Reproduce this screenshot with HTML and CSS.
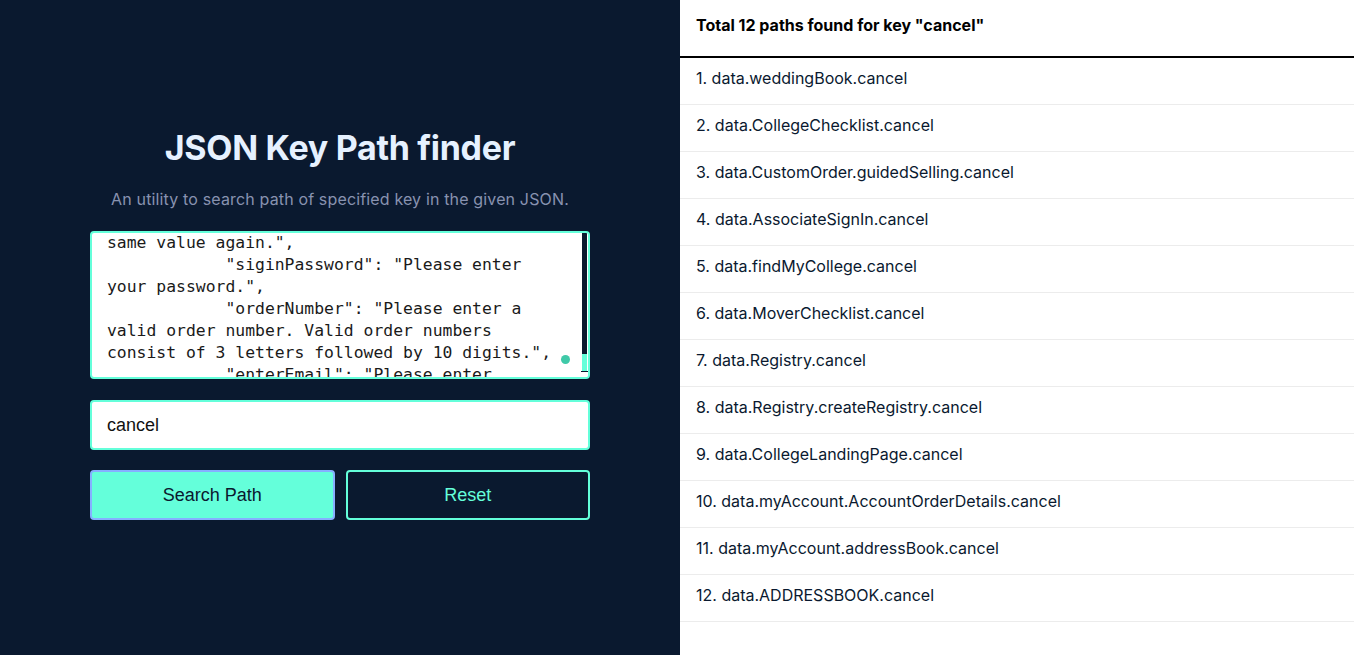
FILE: index.html
```html
<!DOCTYPE html>
<html lang="en">
<head>
<meta charset="utf-8">
<title>JSON Key Path finder</title>
<link rel="stylesheet" href="styles.css">
</head>
<body>
<div class="page">
  <section class="left">
    <div class="tool">
      <h1 class="title">JSON Key Path finder</h1>
      <p class="subtitle">An utility to search path of specified key in the given JSON.</p>
      <div class="json-box">
<pre class="json-text">same value again.",
            "siginPassword": "Please enter
your password.",
            "orderNumber": "Please enter a
valid order number. Valid order numbers
consist of 3 letters followed by 10 digits.",
            "enterEmail": "Please enter</pre>
        <span class="ext-dot"></span>
        <span class="scroll-track"><span class="scroll-thumb"></span></span>
        <span class="resize-corner"></span>
      </div>
      <div class="key-input">cancel</div>
      <div class="actions">
        <button class="btn btn-primary">Search Path</button>
        <button class="btn btn-outline">Reset</button>
      </div>
    </div>
  </section>
  <section class="right">
    <div class="results-head">Total 12 paths found for key "cancel"</div>
    <ul class="results">
      <li>1. data.weddingBook.cancel</li>
      <li>2. data.CollegeChecklist.cancel</li>
      <li>3. data.CustomOrder.guidedSelling.cancel</li>
      <li>4. data.AssociateSignIn.cancel</li>
      <li>5. data.findMyCollege.cancel</li>
      <li>6. data.MoverChecklist.cancel</li>
      <li>7. data.Registry.cancel</li>
      <li>8. data.Registry.createRegistry.cancel</li>
      <li>9. data.CollegeLandingPage.cancel</li>
      <li>10. data.myAccount.AccountOrderDetails.cancel</li>
      <li>11. data.myAccount.addressBook.cancel</li>
      <li>12. data.ADDRESSBOOK.cancel</li>
    </ul>
  </section>
</div>
</body>
</html>
```
FILE: styles.css
```css
* { box-sizing: border-box; }
html, body { margin: 0; padding: 0; height: 100%; }
body { font-family: Inter, "Noto Sans", sans-serif; }

.page {
  display: flex;
  height: 655px;
  width: 1354px;
}

.left {
  width: 680px;
  background: #0a192f;
  display: flex;
  justify-content: center;
  align-items: center;
}

.tool {
  width: 500px;
  display: flex;
  flex-direction: column;
  padding-bottom: 8px;
}

.title {
  margin: 0;
  font-size: 34px;
  line-height: 40px;
  font-weight: 700;
  color: #e6f1ff;
  text-align: center;
  letter-spacing: -0.3px;
}

.subtitle {
  margin: 21px 0 22px;
  font-size: 16px;
  line-height: 20px;
  color: #8892b0;
  text-align: center;
  letter-spacing: 0.15px;
}

.json-box {
  position: relative;
  height: 148px;
  background: #fff;
  border: 2px solid #64ffda;
  border-radius: 4px;
  overflow: hidden;
}

.json-text {
  margin: -1px 0 0;
  padding: 0 0 0 15px;
  font-family: "DejaVu Sans Mono", "Liberation Mono", monospace;
  font-size: 16.4px;
  line-height: 22px;
  color: #1a1a1a;
  white-space: pre;
}

.ext-dot {
  position: absolute;
  right: 18px;
  top: 122px;
  width: 9px;
  height: 9px;
  border-radius: 50%;
  background: #3fc9a8;
}

.scroll-track {
  position: absolute;
  right: 1px;
  top: 0;
  width: 5px;
  height: 138px;
  background: #0a192f;
}

.scroll-thumb {
  position: absolute;
  left: 0;
  bottom: 0;
  width: 5px;
  height: 17px;
  background: #64ffda;
}

.resize-corner {
  position: absolute;
  right: 0;
  bottom: 0;
  width: 7px;
  height: 6px;
  background: #fff;
  border-top: 1px solid #0a192f;
}

.key-input {
  margin-top: 21px;
  height: 50px;
  background: #fff;
  border: 2px solid #64ffda;
  border-radius: 4px;
  padding: 2px 15px 0;
  display: flex;
  align-items: center;
  font-family: "Liberation Sans", Arial, sans-serif;
  font-size: 18px;
  color: #111;
}

.actions {
  margin-top: 20px;
  display: flex;
  gap: 11px;
}

.btn {
  flex: 1;
  height: 50px;
  padding-top: 2px;
  border-radius: 4px;
  font-family: "Liberation Sans", Arial, sans-serif;
  font-size: 18px;
  cursor: pointer;
}

.btn-primary {
  background: #64ffda;
  border: 2px solid #85b0ff;
  color: #0a192f;
}

.btn-outline {
  background: #0a192f;
  border: 2px solid #64ffda;
  color: #64ffda;
}

.right {
  flex: 1;
  background: #fff;
}

.results-head {
  height: 58px;
  padding: 0 16px 6px;
  border-bottom: 2px solid #000;
  display: flex;
  align-items: center;
  font-size: 16px;
  font-weight: 700;
  color: #000;
}

.results {
  list-style: none;
  margin: 0;
  padding: 0;
}

.results li {
  height: 47px;
  padding: 0 16px 6px;
  border-bottom: 1px solid #ececec;
  display: flex;
  align-items: center;
  font-size: 16px;
  color: #0a192f;
}
```
